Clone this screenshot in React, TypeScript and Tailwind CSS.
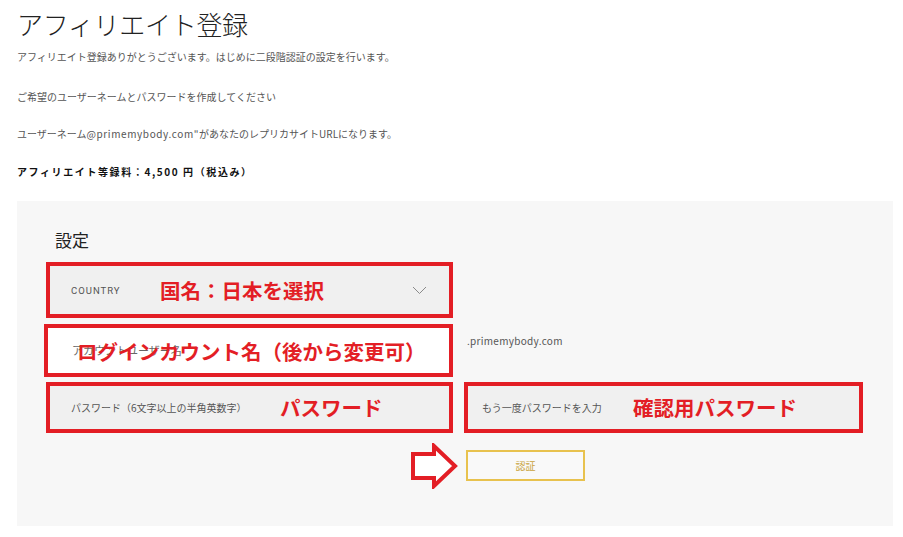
import React from "react";

const jp = { fontFamily: '"Noto Sans CJK JP", "Noto Sans", sans-serif' };

function Arrow() {
  return (
    <svg width="48" height="46" viewBox="0 0 48 46" className="shrink-0">
      <polygon
        points="3,11 24,11 24,3 45,23 24,43 24,35 3,35"
        fill="#ffffff"
        stroke="#e31e25"
        strokeWidth="4"
        strokeLinejoin="miter"
      />
    </svg>
  );
}

function Chevron() {
  return (
    <svg width="15" height="9" viewBox="0 0 15 9">
      <path d="M1 1 L7.5 7.5 L14 1" fill="none" stroke="#8a8a8a" strokeWidth="1" />
    </svg>
  );
}

export default function App() {
  return (
    <div className="min-h-[537px] w-[903px] bg-white pl-[17px] pt-[9px] text-[#333]" style={jp}>
      <h1 className="text-[26px] font-light leading-[30px] tracking-[-0.3px] text-[#222]">
        アフィリエイト登録
      </h1>
      <p className="mt-[11px] text-[10px] leading-[14px] text-[#555]">
        アフィリエイト登録ありがとうございます。はじめに二段階認証の設定を行います。
      </p>
      <p className="mt-[26px] text-[10px] leading-[14px] text-[#555]">
        ご希望のユーザーネームとパスワードを作成してください
      </p>
      <p className="mt-[23px] text-[10px] leading-[14px] text-[#555]">
        ユーザーネーム<span className="tracking-[0.6px]">@primemybody.com"</span>があなたのレプリカサイトURLになります。
      </p>
      <p className="mt-[24px] text-[10px] font-bold leading-[14px] tracking-[1.6px] text-[#111]">
        アフィリエイト等録料：4,500 円（税込み）
      </p>

      <div className="mt-[22px] w-[876px] bg-[#f7f7f7] pb-[37px] pl-[29px] pt-[29px]">
        <h2 className="pl-[9px] text-[17px] leading-[20px] text-[#222]">設定</h2>

        {/* Country */}
        <div className="mt-[12px] flex h-[56px] w-[407px] items-center border-[4px] border-[#e31e25] bg-[#f0f0f0] pl-[21px] pr-[22px]">
          <span className="mt-[3px] w-[89px] text-[9.5px] tracking-[1px] text-[#555]" style={{ fontFamily: '"Roboto", "Noto Sans", sans-serif' }}>
            COUNTRY
          </span>
          <span className="text-[20.5px] font-bold text-[#e31e25]">国名：日本を選択</span>
          <span className="ml-auto flex items-center">
            <Chevron />
          </span>
        </div>

        {/* Username */}
        <div className="mt-[6px] -ml-[2px] flex items-start">
          <div className="relative flex h-[53px] w-[409px] items-center border-[4px] border-[#e31e25] bg-white pl-[24px]">
            <span className="text-[11px] text-[#666]">アカウントユーザー名</span>
            <span className="absolute left-[29px] top-1/2 -translate-y-1/2 whitespace-nowrap text-[20.5px] font-bold text-[#e31e25]">
              ログインカウント名（後から変更可）
            </span>
          </div>
          <span className="ml-[14px] mt-[9px] text-[10px] tracking-[0.3px] text-[#555]">.primemybody.com</span>
        </div>

        {/* Passwords */}
        <div className="mt-[5px] flex gap-[11px]">
          <div className="flex h-[51px] w-[407px] items-center border-[4px] border-[#e31e25] bg-[#f0f0f0] pl-[21px]">
            <span className="w-[209px] text-[10px] text-[#555]">パスワード（6文字以上の半角英数字）</span>
            <span className="text-[20.5px] font-bold text-[#e31e25]">パスワード</span>
          </div>
          <div className="flex h-[51px] w-[399px] items-center border-[4px] border-[#e31e25] bg-[#f0f0f0] pl-[14px]">
            <span className="w-[151px] text-[10px] text-[#555]">もう一度パスワードを入力</span>
            <span className="text-[20.5px] font-bold text-[#e31e25]">確認用パスワード</span>
          </div>
        </div>

        {/* Submit */}
        <div className="mt-[10px] flex items-center gap-[8px] pl-[364px]">
          <Arrow />
          <button className="mt-[-1px] h-[31px] w-[119px] border-2 border-[#e8c24e] bg-[#f9f9f9] text-[10px] text-[#c9a33c]">
            認証
          </button>
        </div>
      </div>
    </div>
  );
}
